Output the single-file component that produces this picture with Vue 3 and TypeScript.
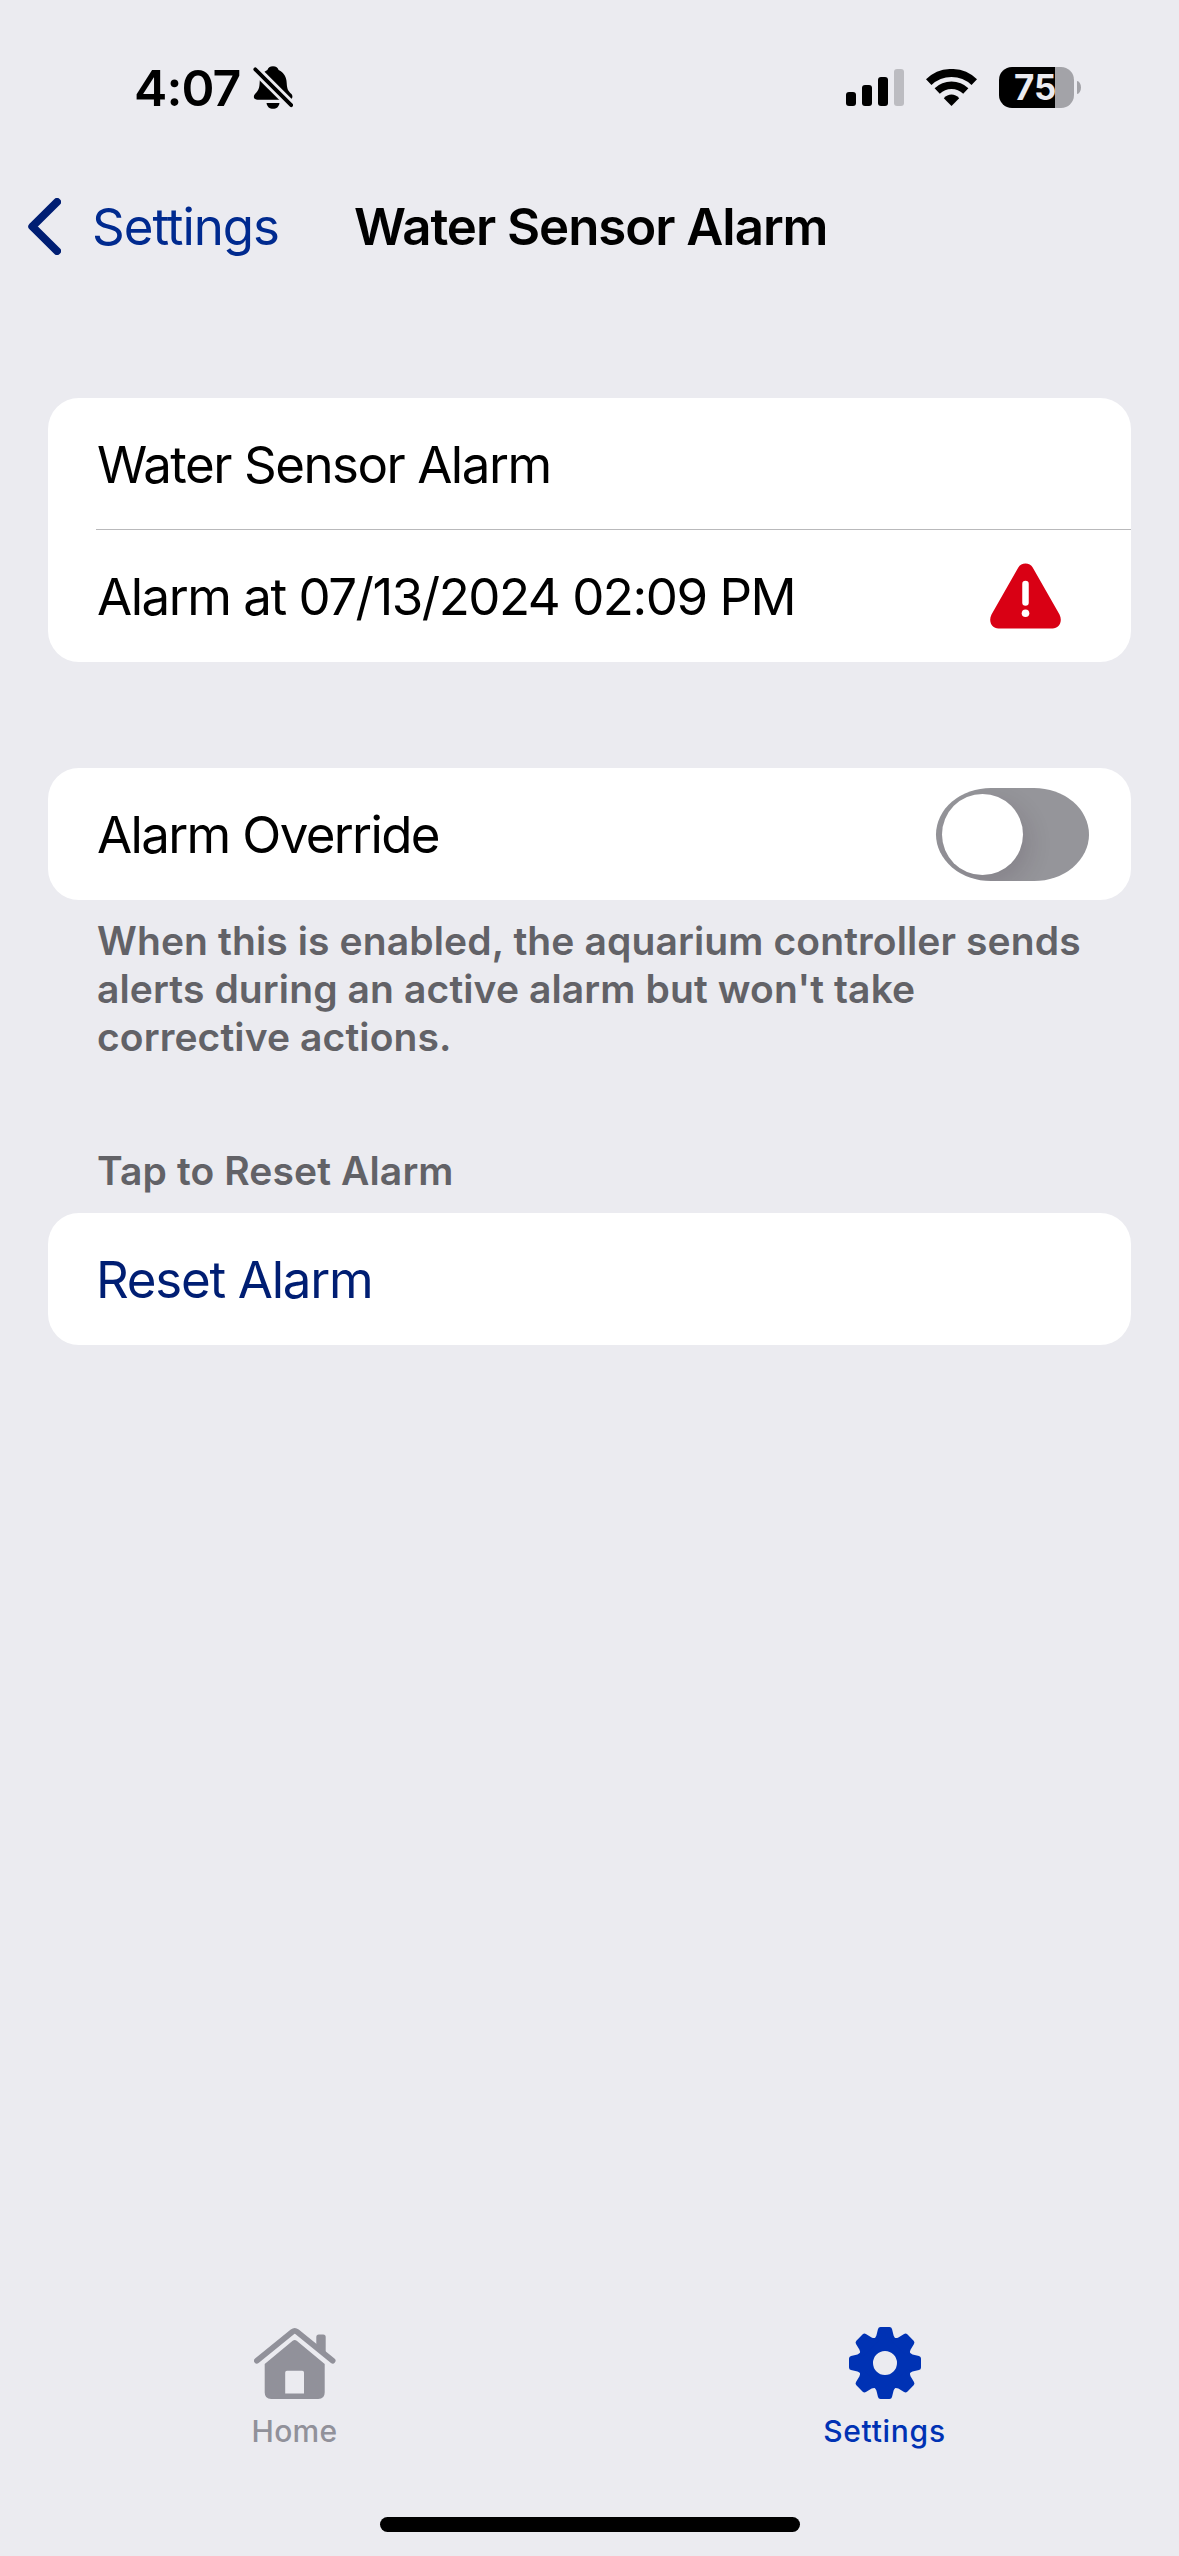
<script setup lang="ts">
import { ref } from 'vue'

const alarmOverride = ref(false)
const signalBars = [14, 21, 29, 37]
const toothAngles = [0, 45, 90, 135, 180, 225, 270, 315]
</script>

<template>
  <div class="screen">
    <header class="status">
      <div class="status-left">
        <span class="time">4:07</span>
        <svg class="bell" width="40" height="43" viewBox="0 0 40 43">
          <path d="M20 .3C23 .3 25 1.8 25.6 4C31 6.5 33.5 11 33.7 17C34 23 35 25 38.5 28C40.3 30 39.5 33.7 36 33.7H4.5C.5 33.7 0 30 2 28C5.5 24.5 6.5 22 6.7 16C7 10 9.5 6.5 14.4 4C15 1.8 17 .3 20 .3Z" />
          <path d="M13.5 37H26.5C25.8 41 23.5 42.8 20 42.8S14.2 41 13.5 37Z" />
          <path d="M2.3 3.300L38.200 39.200" class="bell-gap" />
          <path d="M2.3 3.300L38.200 39.200" class="bell-slash" />
        </svg>
      </div>
      <div class="status-right">
        <div class="signal">
          <i v-for="(h, i) in signalBars" :key="i" :class="{ off: i === 3 }" :style="{ height: h + 'px' }" />
        </div>
        <svg class="wifi" width="51" height="37" viewBox="0 0 51 37">
          <path d="M2.7 13.1A33 33 0 0 1 48.3 13.1" fill="none" stroke="#000" stroke-width="8" />
          <path d="M11.2 22A20.700 20.700 0 0 1 39.8 22" fill="none" stroke="#000" stroke-width="7.5" />
          <path d="M25.5 37L17.8 29.3C22 24.3 29 24.3 33.2 29.3Z" />
        </svg>
        <div class="battery"><span>75</span></div>
        <i class="nub" />
      </div>
    </header>

    <nav class="nav">
      <svg class="chevron" width="33" height="57" viewBox="0 0 33 57">
        <path d="M29 4L4.3 28.5L29 53" />
      </svg>
      <span class="back">Settings</span>
      <h1>Water Sensor Alarm</h1>
    </nav>

    <main>
      <section class="card">
        <div class="row"><span class="label">Water Sensor Alarm</span></div>
        <div class="divider" />
        <div class="row second">
          <span class="label">Alarm at 07/13/2024 02:09 PM</span>
          <svg class="warn" width="71" height="66" viewBox="0 0 71 66">
            <path d="M28.300 4.500C31 -1 40 -1 42.700 4.500L69.500 51.500C73 58.500 69 65.500 62.500 65.500H8.500C2 65.500 -2 58.500 1.500 51.500Z" fill="#d90014" />
            <path d="M35.500 21V39.500" stroke="#fff" stroke-width="6.5" stroke-linecap="round" />
            <circle cx="35.5" cy="50.3" r="3.8" fill="#fff" />
          </svg>
        </div>
      </section>

      <section class="card override">
        <div class="row">
          <span class="label override-label">Alarm Override</span>
          <button class="toggle" role="switch" :aria-checked="alarmOverride" @click="alarmOverride = !alarmOverride"><i /></button>
        </div>
      </section>
      <p class="note">When this is enabled, the aquarium controller sends<br />alerts during an active alarm but won't take<br />corrective actions.</p>

      <h2>Tap to Reset Alarm</h2>
      <section class="card">
        <div class="row"><span class="label reset">Reset Alarm</span></div>
      </section>
    </main>

    <footer class="tabs">
      <div class="tab home">
        <svg width="82" height="72" viewBox="0 0 82 72">
          <path d="M2.800 33.700L38.500 4.800Q40.700 3 43 4.800L78.700 33.700" fill="none" stroke="currentColor" stroke-width="5.6" stroke-linecap="round" stroke-linejoin="round" />
          <path d="M62.300 20V10Q62.300 7.500 64.800 7.500H69.200Q71.700 7.500 71.700 10V27Z" fill="currentColor" />
          <path fill-rule="evenodd" d="M38.700 13.800Q40.700 12.200 42.700 13.800L70.700 37V65.500Q70.700 72 64.200 72H17.200Q10.700 72 10.700 65.500V37ZM33 43.700Q31.200 43.700 31.200 45.500V66.500H50V45.500Q50 43.700 48.200 43.700Z" fill="currentColor" />
        </svg>
        <span>Home</span>
      </div>
      <div class="tab active">
        <svg width="72" height="72" viewBox="-36 -36 72 72">
          <circle r="19.3" fill="none" stroke="currentColor" stroke-width="14.6" />
          <path v-for="a in toothAngles" :key="a" :transform="`rotate(${a})`" d="M-4.500 -36H4.500Q6.500 -36 7 -34L8.600 -27.500Q9.200 -25.500 11.500 -24V-20H-11.500V-24Q-9.200 -25.500 -8.600 -27.500L-7 -34Q-6.500 -36 -4.500 -36Z" fill="currentColor" />
        </svg>
        <span>Settings</span>
      </div>
    </footer>
    <div class="indicator" />
  </div>
</template>

<style>
body {
  background: #ebebf0;
}
</style>

<style scoped>
.screen {
  box-sizing: border-box;
  width: 1179px;
  height: 2556px;
  display: flex;
  flex-direction: column;
  background: #ebebf0;
  color: #000;
  font-family: Inter, 'Liberation Sans', sans-serif;
  overflow: hidden;
}
.status {
  height: 175px;
  flex: none;
  display: flex;
  justify-content: space-between;
  align-items: center;
  padding: 0 98px 0 134px;
}
.status-left,
.status-right {
  display: flex;
  align-items: center;
}
.time {
  width: 106px;
  font-size: 50px;
  font-weight: 600;
  letter-spacing: -0.9px;
}
.bell {
  margin-left: 13px;
}
.bell-gap {
  stroke: #ebebf0;
  stroke-width: 9.5;
}
.bell-slash {
  stroke: #000;
  stroke-width: 3.8;
  stroke-linecap: round;
}
.signal {
  display: flex;
  align-items: flex-end;
  gap: 6px;
  height: 37px;
}
.signal i {
  width: 10px;
  border-radius: 3px;
  background: #000;
}
.signal i.off {
  background: #bcbcc1;
}
.wifi {
  margin: 0 22px;
}
.battery {
  box-sizing: border-box;
  width: 75px;
  height: 41px;
  border-radius: 13px;
  background: linear-gradient(90deg, #000 56px, #a3a3a8 56px);
  color: #ebebf0;
  font-size: 35px;
  font-weight: 700;
  line-height: 41px;
  padding-left: 15px;
}
.nub {
  width: 4px;
  height: 13px;
  margin-left: 3px;
  border-radius: 0 4px 4px 0 / 0 6.5px 6.5px 0;
  background: #a3a3a8;
}
.nav {
  flex: none;
  height: 103px;
  display: flex;
  align-items: center;
  padding-left: 28px;
}
.chevron path {
  fill: none;
  stroke: #001e73;
  stroke-width: 8;
  stroke-linecap: round;
  stroke-linejoin: round;
}
.back {
  width: 262px;
  margin-left: 31px;
  font-size: 51px;
  letter-spacing: -1.04px;
  color: #002a8f;
}
h1 {
  margin: 0;
  font-size: 51px;
  font-weight: 600;
  letter-spacing: -1.05px;
  white-space: nowrap;
}
main {
  flex: 1;
  min-height: 0;
  padding: 120px 48px 0;
}
.card {
  background: #fff;
  border-radius: 31px;
}
.row {
  box-sizing: border-box;
  height: 132px;
  display: flex;
  align-items: center;
  justify-content: space-between;
  padding: 0 42px 0 49px;
}
.divider {
  height: 1px;
  margin: -1px 0 0 48px;
  background: #b9b9bb;
}
.second {
  padding-right: 70px;
}
.label {
  font-size: 51px;
  letter-spacing: -1.48px;
  white-space: nowrap;
}
.override-label {
  letter-spacing: -1.65px;
}
.reset {
  margin-left: -1px;
  letter-spacing: -1.27px;
  color: #001e73;
}
.override {
  margin-top: 106px;
}
.toggle {
  width: 153px;
  height: 93px;
  padding: 6px;
  border: 0;
  border-radius: 55px / 46.5px;
  background: #95959a;
  overflow: hidden;
}
.toggle i {
  display: block;
  width: 81px;
  height: 81px;
  border-radius: 50%;
  background: #fff;
  box-shadow: 6px 9px 24px rgba(40, 20, 40, 0.14);
}
.note,
h2 {
  margin: 17px 0 0 49px;
  font-size: 39px;
  font-weight: 580;
  line-height: 48px;
  letter-spacing: 0.12px;
  color: #626267;
  white-space: nowrap;
}
h2 {
  margin: 86px 0 18px 49px;
}
.tabs {
  flex: none;
  display: flex;
  height: 190px;
}
.tab {
  flex: 1;
  display: flex;
  flex-direction: column;
  align-items: center;
  color: #91919a;
}
.tab.active {
  padding-left: 1px;
  color: #0032b4;
}
.tab span {
  margin-top: 14px;
  font-size: 30px;
  font-weight: 500;
  line-height: 36px;
  letter-spacing: 0.3px;
}
.tab.active span {
  letter-spacing: 0.7px;
}
.indicator {
  flex: none;
  width: 420px;
  height: 15px;
  margin: 0 auto 24px;
  border-radius: 8px;
  background: #000;
}
</style>
